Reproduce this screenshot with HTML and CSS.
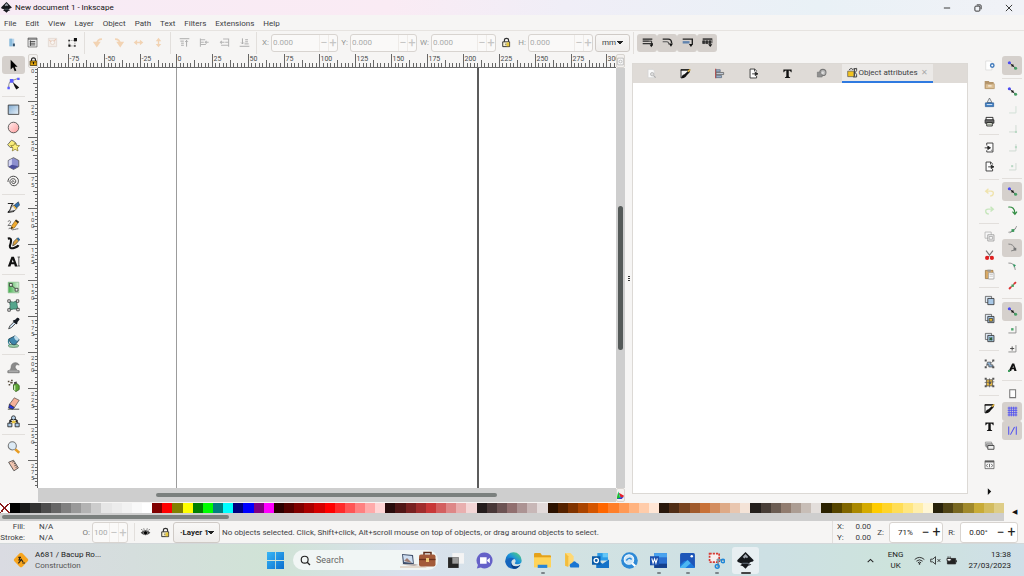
FILE: index.html
```html
<!DOCTYPE html>
<html lang="en">
<head>
<meta charset="utf-8">
<meta name="viewport" content="width=device-width, initial-scale=1">
<title>New document 1 - Inkscape</title>
<link rel="stylesheet" href="styles.css">
</head>
<body>
<svg class="sprite" aria-hidden="true">
  <defs>
    <linearGradient id="g-blue" x1="0" y1="0" x2="1" y2="1"><stop offset="0" stop-color="#7fa9cf"/><stop offset="1" stop-color="#eaf3fb"/></linearGradient>
    <linearGradient id="g-pink" x1="0" y1="0" x2="1" y2="1"><stop offset="0" stop-color="#fff0f0"/><stop offset="1" stop-color="#ff9c9c"/></linearGradient>
    <linearGradient id="g-green" x1="0" y1="0" x2="1" y2="0"><stop offset="0" stop-color="#3fae49"/><stop offset="1" stop-color="#d9f2da"/></linearGradient>
    <linearGradient id="g-win" x1="0" y1="0" x2="1" y2="1"><stop offset="0" stop-color="#38b6f5"/><stop offset="1" stop-color="#0a6fd0"/></linearGradient>
    <linearGradient id="g-edge" x1="0" y1="1" x2="1" y2="0"><stop offset="0" stop-color="#0b4fa8"/><stop offset=".5" stop-color="#1b93dc"/><stop offset="1" stop-color="#5fdc6c"/></linearGradient>
  </defs>
  <symbol id="inkscape" viewBox="0 0 16 16"><path d="M8 0 15.500 7.500Q16.300 9 13 9.500L11 10.500 13.500 12 10.500 13 8 15.800 5.500 13.500 3 12.500 5 11 .8 9.300Q-.3 8.500.7 7.300z" fill="#15181c"/><path d="M8 1.800 10.500 4.600 9.300 5.800 8.300 5 7 6.200 5.400 4.700z" fill="#a4abb4"/><path d="M5 10.500h5l2 1.500" stroke="#66717d" fill="none"/></symbol>
  <symbol id="doc-props" viewBox="0 0 16 16"><path d="M3.500 2.500h7v11h-7z" fill="#b7d4ea"/><path d="M3.500 2.500h4v11h-4z" fill="#8bbbdc"/><path d="M8.500 9.500h3v4h-3z" fill="#35526d"/></symbol>
  <symbol id="xml" viewBox="0 0 16 16"><path d="M1.500 1.500h13v13h-13z" fill="#eee" stroke="#555"/><path d="M1.500 3h13M4 6.500h8M4 9h8M4 11.500h8M5 5v8" stroke="#444" stroke-width="1.300"/></symbol>
  <symbol id="fill-off" viewBox="0 0 16 16"><path d="M2 2h12v12H2z" fill="#f3ece7" stroke="#ddd3cc"/><circle cx="8" cy="8" r="3" fill="#f8f4f1" stroke="#dfcdc0"/><path d="m3 4 3 3M13 3l-3 3" stroke="#eac7b4" stroke-width="1.500"/></symbol>
  <symbol id="bbox" viewBox="0 0 16 16"><path d="M3 5h8.500v8H3z" fill="none" stroke="#777" stroke-dasharray="2 1"/><path d="M10 1.500h4.500V6H10zM2 11h3v3H2zM2 4h2v2H2zM10.500 12h2v2h-2z" fill="#111"/></symbol>
  <symbol id="rot-l" viewBox="0 0 16 16"><path d="M13 3Q6 3 5.500 10M2 8l3.500 5L9 8z" fill="none" stroke="#f2d3b3" stroke-width="2.400"/></symbol>
  <symbol id="rot-r" viewBox="0 0 16 16"><path d="M3 3q7 0 7.500 7M7 8l3.500 5L14 8z" fill="none" stroke="#f2d3b3" stroke-width="2.400"/></symbol>
  <symbol id="flip-h" viewBox="0 0 16 16"><path d="M1 8l5-4v3h4V4l5 4-5 4V9H6v3z" fill="#f2d3b3"/></symbol>
  <symbol id="flip-v" viewBox="0 0 16 16"><path d="M8 1l4 5H9v4h3l-4 5-4-5h3V6H4z" fill="#f2d3b3"/></symbol>
  <symbol id="raise-top" viewBox="0 0 16 16"><path d="M1 2.500h14M2 6h5M3 9h4M3 12h4M11 14V5m-2 2 2-2 2 2" stroke="#a9a9a9" stroke-width="1.400" fill="none"/></symbol>
  <symbol id="raise" viewBox="0 0 16 16"><path d="M2 2v12M2 4h7M2 7.500h5M2 11h8M14 7.500H9m2-2-2 2 2 2" stroke="#b5b5b5" stroke-width="1.500" fill="none"/></symbol>
  <symbol id="lower" viewBox="0 0 16 16"><path d="M14 2v12M6 3h8M9 7.500h5M3 12h11M2 7.500h6m-4-2-2 2 2 2" stroke="#b5b5b5" stroke-width="1.500" fill="none"/></symbol>
  <symbol id="lower-bot" viewBox="0 0 16 16"><path d="M1 13.500h14M8 10h6M9 7h4M9 4h4M5 2v8M3 8l2 2 2-2" stroke="#a9a9a9" stroke-width="1.400" fill="none"/></symbol>
  <symbol id="lock-open" viewBox="0 0 16 16"><path d="M5 7V4.500Q5 2 8 2t3 2.500V7" fill="none" stroke="#333" stroke-width="1.700"/><path d="M2.500 7h10v7h-10z" fill="#f7f2d4" stroke="#222" stroke-width="1.300"/><path d="M8 8h4v5.500H8z" fill="#e8c93e"/><path d="M7 9.500v2.500" stroke="#333"/></symbol>
  <symbol id="lock" viewBox="0 0 16 16"><path d="M4.500 8V5Q4.500 1.500 8 1.500T11.500 5v3" fill="none" stroke="#222" stroke-width="2"/><path d="M2 7h12v8H2z" fill="#e8a90c" stroke="#3a2a04" stroke-width="1.400"/><path d="M2 10h12" stroke="#7a5402"/><path d="M8 9v4" stroke="#111" stroke-width="2"/></symbol>
  <symbol id="tr-stroke" viewBox="0 0 16 16"><path d="M1 3h14M1 6h9" stroke="#222" stroke-width="1.800"/><path d="M1 9.500h14v3" fill="none" stroke="#333" stroke-width="1.800"/><path d="M10 6h4v6" fill="none" stroke="#222" stroke-width="1.400"/><path d="M11 11h5l-2.500 4z" fill="#111"/></symbol>
  <symbol id="tr-corner" viewBox="0 0 16 16"><path d="M1 3h8q5 0 5 6" fill="none" stroke="#222" stroke-width="2"/><path d="M1 7h6q3 0 3 4" fill="none" stroke="#555" stroke-width="1.500"/><path d="M10 9.500h6l-3 4.500z" fill="#111"/></symbol>
  <symbol id="tr-grad" viewBox="0 0 16 16"><path d="M1 3h14v8" fill="none" stroke="#222" stroke-width="2"/><path d="M1 6h10v3.500H1z" fill="#6284ae"/><path d="M10 10h6l-3 4.500z" fill="#111"/></symbol>
  <symbol id="tr-pat" viewBox="0 0 16 16"><path d="M1 3h14" fill="none" stroke="#222" stroke-width="2"/><path d="M1 5.500h3v4H1zM5.500 5.500h3v4h-3zM10 5.500h3v4h-3zM14.500 4v5" fill="#333" stroke="#222"/><path d="M9 10.500h6l-3 4z" fill="#111"/></symbol>
  <symbol id="t-select" viewBox="0 0 16 16"><path d="M4.500 1v12l3-2.800 2 4.800 2-1-2-4.500h3.500z" fill="#000"/></symbol>
  <symbol id="t-node" viewBox="0 0 16 16"><path d="M2 13Q2 5 6 4.500L13 2" fill="none" stroke="#777"/><path d="M.5 12h3v3h-3zM3.500 2.500h4.500v4.500H3.500zM12.500.8h3v3h-3z" fill="#5a5aff"/><path d="M7 6l8 7-3.500 2.500L9.500 12z" fill="#111"/></symbol>
  <symbol id="t-rect" viewBox="0 0 16 16"><path d="M1.500 2.500h13v11.500h-13z" fill="url(#g-blue)" stroke="#333"/></symbol>
  <symbol id="t-circle" viewBox="0 0 16 16"><circle cx="8" cy="8" r="6.500" fill="url(#g-pink)" stroke="#444"/></symbol>
  <symbol id="t-star" viewBox="0 0 16 16"><path d="M5.500 1.500 9 3l2.500 3-2.500 4-5 .5L.8 7z" fill="#f8ec7a" stroke="#555"/><path d="m10 4.500 1.500 3.200 4 .5-2.800 2.500.8 4-3.500-2-3.500 2 .8-4L4.500 8.200l4-.5z" fill="#fdf07e" stroke="#77691a" stroke-width=".8"/></symbol>
  <symbol id="t-box" viewBox="0 0 16 16"><path d="m8 .8 6.500 3.500v7.500L8 15.300 1.500 11.800V4.300z" fill="#8d90cf" stroke="#555"/><path d="M6 2v8l-4 2V4.500z" fill="#d3d5f2"/><path d="M6 9.500 14 11.500 8 15 2 12z" fill="#4c4f9c"/></symbol>
  <symbol id="t-spiral" viewBox="0 0 16 16"><path d="M8 8.500C9 7.500 7.500 6.500 6.500 7.300 5 8.500 6.300 10.700 8.300 10.500 11 10.200 11.500 7 9.800 5.400 7.500 3.400 4 5 3.600 8 3.200 11 6 13.500 9 13.200 12.800 12.800 14.800 9 13.800 5.700 12.800 2.300 9 .8 5.800 1.800 2.800 2.800 1 5.500 1.200 8.500" fill="none" stroke="#444" stroke-width="1.200"/></symbol>
  <symbol id="t-pen" viewBox="0 0 16 16"><path d="M1 3h7M7 3Q5 6 4.500 9T1 14l7-1 2-3" fill="none" stroke="#222" stroke-width="1.300"/><path d="m3 13 2.500-6 3-2 3.500 4-2 2.500z" fill="#eee" stroke="#444"/><path d="M9 5l5-4 1.500 4-4 4z" fill="#2f6fae" stroke="#222" stroke-width=".6"/><path d="M8.500 5.500 12 9l-1.500 1.500-3.300-3.700z" fill="#e9b94d"/></symbol>
  <symbol id="t-pencil" viewBox="0 0 16 16"><path d="M1 3q3-2 3.500 0T1 8h4M2 12q2-2 3 0t4 1 5-1" fill="none" stroke="#666" stroke-width="1.100"/><path d="M5 12 6 8l5-7 3.500 2.500-5.500 7.500z" fill="#f2ac2e" stroke="#6a4a14" stroke-width=".7"/><path d="m5 12 .7-2.500 1.800 1.300z" fill="#111"/><path d="m11 1 3.500 2.500-1 1.600L10 2.500z" fill="#2b2b2b"/></symbol>
  <symbol id="t-callig" viewBox="0 0 16 16"><path d="M1 2q4-1 4 2T3.500 11q0 4 5 2.500T14 10" fill="none" stroke="#111" stroke-width="2.600"/><path d="m7 11 1-5 5-5 2.500 2.500L10.500 9z" fill="#dba23e" stroke="#333" stroke-width=".8"/><path d="m12 2 2-1.500 2 2.500-2 2z" fill="#2d6a9f"/></symbol>
  <symbol id="t-text" viewBox="0 0 16 16"><path d="M1 14 5.500 2h3L13 14h-3.300l-.8-2.500H5.100L4.300 14zm5-5h2.200L7 5.500z" fill="#111"/><path d="M13 2.500h3M14.500 2.500v11M13 13.500h3" stroke="#444" fill="none"/></symbol>
  <symbol id="t-grad" viewBox="0 0 16 16"><path d="M1.500 1.500h13v13h-13z" fill="url(#g-green)" stroke="#8fbf92"/><path d="m5 5 6 5" stroke="#333"/><path d="M3 3h3.500v3.500H3zM10 9h3.500v3.500H10z" fill="#e9f5e9" stroke="#333"/></symbol>
  <symbol id="t-mesh" viewBox="0 0 16 16"><path d="M3 3q5 2 9-.5 0 5 1.500 10Q8 11.500 3 13.500 5 8 3 3z" fill="#55a68d" stroke="#2f6b59"/><path d="M1 1h3v3H1zM11.500 1h3v3h-3zM1 12h3v3H1zM12 11.500h3v3h-3z" fill="#fff" stroke="#333"/></symbol>
  <symbol id="t-drop" viewBox="0 0 16 16"><path d="M2 14.500 3.500 11l5-5L10.500 8l-5 5z" fill="#cfe3f5" stroke="#333"/><path d="m8 4 2-.5L12.500 1Q15 .5 15.500 3L13 6l-.5 2.500L11.500 9 7 5z" fill="#151a22"/></symbol>
  <symbol id="t-bucket" viewBox="0 0 16 16"><ellipse cx="8" cy="13.300" rx="6.500" ry="2" fill="#9cd0ab" stroke="#3c6d4b" stroke-width=".8"/><path d="m2 5 8-4 5 5-5 6q-5 1-8-7z" fill="#3f86ac" stroke="#24404f"/><ellipse cx="11.500" cy="4" rx="2" ry="3.500" transform="rotate(-45 11.500 4)" fill="#bcdcec"/><path d="M2 5Q1 9 3 12" fill="none" stroke="#2d7a8c" stroke-width="1.500"/></symbol>
  <symbol id="t-tweak" viewBox="0 0 16 16"><path d="M1 14.500V12q4 0 4-4 0-6 6-6 3 .5 4 3-3-1.500-4.500.5T11 9.500q.5 2.500 4 2.500v2.500z" fill="#8a8a8a" stroke="#666" stroke-width=".7"/><path d="M2 12.500h12" stroke="#c8c8c8"/></symbol>
  <symbol id="t-spray" viewBox="0 0 16 16"><path d="m8 7 4-1.500 3 2.500v5l-4 2.500L8 13z" fill="#5ca534" stroke="#2f5c18"/><path d="M8.500 4 12 3v2.500L9 6.500z" fill="#444"/><path d="M1 2h2v2H1zM4 3.500h3v2H4zM2 6h2v2H2zM5 1h2v1.500H5z" fill="#554a3a"/><path d="M9.500 8v6" stroke="#d5efc4" stroke-width="1.500"/></symbol>
  <symbol id="t-eraser" viewBox="0 0 16 16"><path d="m3 9 6-8 6 3-6 9z" fill="#f5b199" stroke="#444" stroke-width=".8"/><path d="m3 9 6 4-2 2-5-1.500z" fill="#2937e0" stroke="#222" stroke-width=".8"/><path d="M1 15h14" stroke="#333"/></symbol>
  <symbol id="t-conn" viewBox="0 0 16 16"><path d="M3.500 11V7L8 4l4.500 3v4M3.500 8h9" fill="none" stroke="#222" stroke-width="1.500"/><path d="M1 10h5v4.500H1zM10 10h5v4.500h-5z" fill="#aac8e4" stroke="#222"/><circle cx="8" cy="3.500" r="2.500" fill="#b5d0e8" stroke="#222"/><path d="M6 7h5l-1 3H6z" fill="#e6c33f"/></symbol>
  <symbol id="t-zoom" viewBox="0 0 16 16"><path d="m10 10 5 4.500" stroke="#e79c22" stroke-width="3.200"/><circle cx="6.500" cy="6" r="5" fill="#dceaf5" stroke="#777" stroke-width="1.300"/></symbol>
  <symbol id="t-measure" viewBox="0 0 16 16"><path d="m2 4 6-2.500 6 9.500-5.500 3.500z" fill="#f0c4b0" stroke="#444"/><path d="M8.500 3 6.500 4M10 5.200 8.500 6M11.500 7.300 9 8.500M12.500 9.500l-2 1" stroke="#444"/></symbol>
  <symbol id="d-search" viewBox="0 0 16 16"><path d="M3 2h7l2 2v10H3z" fill="#fafafa" stroke="#d5d5d5"/><circle cx="9" cy="9" r="2.500" fill="#ddd" stroke="#aaa"/><path d="m11 11 3 3" stroke="#aaa" stroke-width="1.500"/></symbol>
  <symbol id="d-fill" viewBox="0 0 16 16"><path d="M1.500 2.500h13q-1.500 5-5 7.500t-4.500 4l-3.500.5z" fill="#f4f4f4" stroke="#111" stroke-width="1.200"/><path d="M1 2h13v1.800H1z" fill="#111"/><path d="M2 14.500q0-4 4.500-5.500L12 4l2.500 1.500L10 10q-2 5-8 4.500z" fill="#111"/><path d="m11 4.500 3-3 1.500 1.500-3 3z" fill="#e5b63b"/></symbol>
  <symbol id="d-align" viewBox="0 0 16 16"><path d="M2.500 1v14" stroke="#b33" stroke-width="1.500"/><path d="M3 2.500h6v3H3zM3 11h8v3H3z" fill="#9db3cc" stroke="#56657a"/><path d="M3 6.500h11v3H3z" fill="#c0c9d6" stroke="#555"/></symbol>
  <symbol id="d-export" viewBox="0 0 16 16"><path d="M9.500 1.500H3v13h9.500v-3M12.500 5V4l-3-2.500V5" fill="#fdfdfd" stroke="#333" stroke-width="1.300"/><path d="M6 8.500h5M10.500 6l4 2.500-4 2.500z" fill="#222" stroke="#222" stroke-width="1.200"/></symbol>
  <symbol id="d-import" viewBox="0 0 16 16"><path d="M4 5V1.500h9v13H4V12" fill="#fdfdfd" stroke="#333" stroke-width="1.300"/><path d="M1 8.500h5M5.500 6l4 2.500-4 2.500z" fill="#222" stroke="#222" stroke-width="1.200"/><path d="M10 12h2" stroke="#444"/></symbol>
  <symbol id="d-text" viewBox="0 0 16 16"><path d="M2 2h12v4h-1Q12.500 3.500 9.800 3.500V12q0 1.300 2 1.500V14.500H4.300v-1q2 0 2-1.500V3.500Q3.500 3.500 3 6H2z" fill="#111"/></symbol>
  <symbol id="d-shapes" viewBox="0 0 16 16"><circle cx="10" cy="6.500" r="4.500" fill="#b9b9b9" stroke="#777" stroke-width="1.500"/><path d="M2 6h7v7H2z" fill="#909090" stroke="#777"/><circle cx="9.500" cy="7" r="2" fill="#ddd"/></symbol>
  <symbol id="d-attr" viewBox="0 0 16 16"><path d="M1 6h9v8H1z" fill="#f3c31e" stroke="#555"/><path d="m3 4 3-2 3 2M9 3l5-1v3l-2 3 2 3v3.500H9M11 2v12" fill="none" stroke="#333" stroke-width="1.300"/></symbol>
  <symbol id="c-new" viewBox="0 0 16 16"><path d="M2.500 1.500h7l2 2v11h-9z" fill="#fff" stroke="#d5d5d5"/><circle cx="12" cy="8" r="2.500" fill="#fff" stroke="#3f79bb" stroke-width="2"/></symbol>
  <symbol id="c-open" viewBox="0 0 16 16"><path d="M1 3h6l1 1.500h6V14H1z" fill="#b3946a"/><path d="M2 7h13v7H2z" fill="#dcbf94" stroke="#b3946a"/><path d="M6 9h5v2H6z" fill="#f6ecdb"/></symbol>
  <symbol id="c-save" viewBox="0 0 16 16"><path d="M8 1.500 11.500 8h-7z" fill="#e4ecf4" stroke="#555"/><path d="M2 8.500h12V14H2z" fill="#3d7dc2" stroke="#2b5c94"/><path d="M4 11h8" stroke="#cfe0f2" stroke-width="1.500"/></symbol>
  <symbol id="c-print" viewBox="0 0 16 16"><path d="M3 2h10v4H3z" fill="#fff" stroke="#222" stroke-width="1.300"/><path d="M1.500 5.500h13v5h-13z" fill="#666" stroke="#222"/><path d="M4 9.500h8v5H4z" fill="#f3fbe9" stroke="#222" stroke-width="1.300"/><path d="M5 12h6" stroke="#555"/></symbol>
  <symbol id="c-undo" viewBox="0 0 16 16"><path d="M3 6h7q4 0 3.500 3.500T9 13M6.500 2.500 2.500 6l4 3.500" fill="none" stroke="#efe3ad" stroke-width="2"/></symbol>
  <symbol id="c-redo" viewBox="0 0 16 16"><path d="M13 6H6q-4 0-3.500 3.500T7 13M9.500 2.500l4 3.500-4 3.500" fill="none" stroke="#c7e6bd" stroke-width="2"/></symbol>
  <symbol id="c-copy" viewBox="0 0 16 16"><path d="M1.500 1.500h9v9h-9z" fill="#f6f6f6" stroke="#aaa"/><path d="M5.500 5.500h9v9h-9z" fill="#f6f6f6" stroke="#888"/><path d="M7.500 8h5v4h-5z" fill="none" stroke="#999"/></symbol>
  <symbol id="c-cut" viewBox="0 0 16 16"><path d="m3 1 7 9M13 1l-7 9" stroke="#777" stroke-width="1.700"/><circle cx="4.500" cy="11.500" r="3" fill="#e02020"/><circle cx="11.500" cy="11.500" r="3" fill="#e02020"/></symbol>
  <symbol id="c-paste" viewBox="0 0 16 16"><path d="M2 2h11v12H2z" fill="#d9a964" stroke="#8f6c39"/><path d="M5 1h5v3H5z" fill="#999"/><path d="M6.500 5.500h8v9h-8z" fill="#fbfbfb" stroke="#999"/><path d="M8 8h5M8 10.500h5" stroke="#bbb"/></symbol>
  <symbol id="c-dup" viewBox="0 0 16 16"><path d="M2 2h9v9H2z" fill="#dfe9f3" stroke="#444"/><path d="M5.500 5h9v9h-9z" fill="#a9c8e6" stroke="#333" stroke-width="1.200"/></symbol>
  <symbol id="c-clone" viewBox="0 0 16 16"><path d="M2 2h9v9H2z" fill="#dfe9f3" stroke="#444"/><path d="M5.500 5h9v9h-9z" fill="#a9c8e6" stroke="#333" stroke-width="1.200"/><path d="M7.500 8h5v4h-5z" fill="#e4b32e" stroke="#333"/></symbol>
  <symbol id="c-unlink" viewBox="0 0 16 16"><path d="M2 2h9v9H2z" fill="#dfe9f3" stroke="#444"/><path d="M5.500 5h9v9h-9z" fill="#a9c8e6" stroke="#333" stroke-width="1.200"/><path d="m8 8 4 4m0-4-4 4" stroke="#2e5a3a" stroke-width="2"/></symbol>
  <symbol id="c-group" viewBox="0 0 16 16"><path d="M5 6h5v4h3v3H7v-3H4z" fill="#8eb0d2" stroke="#444"/><path d="M1 2h3v3H1zM12 2h3v3h-3zM1 12h3v3H1zM12 12h3v3h-3z" fill="#555"/><path d="m11 7 3-4M3 12l3-3" stroke="#555"/></symbol>
  <symbol id="c-ungroup" viewBox="0 0 16 16"><path d="M3.500 4h9v9h-9z" fill="#e3b643" stroke="#444"/><path d="M1 1h3v3H1zM12 1h3v3h-3zM1 12h3v3H1zM12 12h3v3h-3zM7 7h3v3H7z" fill="#555"/><path d="m1 8 14-1M8 2v13" stroke="#555"/></symbol>
  <symbol id="c-layers" viewBox="0 0 16 16"><path d="M2 3h9v6H2z" fill="#ddd" stroke="#888"/><path d="M3.500 5.500h9v5h-9z" fill="#bbb" stroke="#777"/><path d="M5.500 8h9v5.500h-9z" fill="#eee" stroke="#333" stroke-width="1.200"/></symbol>
  <symbol id="c-xml" viewBox="0 0 16 16"><path d="M1.500 2.500h13v11.500h-13z" fill="#f8f8f8" stroke="#444"/><path d="M1.500 4h13" stroke="#555" stroke-width="2"/><path d="M5.500 7 3.500 9.500l2 2.500M10.500 7l2 2.500-2 2.500M8 7v5" fill="none" stroke="#555" stroke-width="1.200"/></symbol>
  <symbol id="play" viewBox="0 0 16 16"><path d="M5 2v12l6-6z" fill="#111"/></symbol>
  <symbol id="s-nodes" viewBox="0 0 16 16"><path d="m3.500 4 9 8" stroke="#222" stroke-width="1.300"/><circle cx="3.500" cy="4" r="2.300" fill="#4c4cf2"/><circle cx="12.500" cy="12" r="2.300" fill="#46a066"/><path d="M6.500 6.500h3v3h-3z" fill="#111"/></symbol>
  <symbol id="s-edge" viewBox="0 0 16 16"><path d="M13 3v10H3" fill="none" stroke="#cfe0d5" stroke-width="1.300"/></symbol>
  <symbol id="s-corner" viewBox="0 0 16 16"><path d="M13 3v10H3" fill="none" stroke="#cdd8d0" stroke-width="1.300"/><path d="M11.500 11.500h3v3h-3z" fill="#b9d8c4"/></symbol>
  <symbol id="s-mid" viewBox="0 0 16 16"><path d="M13 3v10H3" fill="none" stroke="#cdd8d0" stroke-width="1.300"/><path d="M11.500 6h3v3h-3z" fill="#b9d8c4"/></symbol>
  <symbol id="s-cent" viewBox="0 0 16 16"><path d="M13 3v10H3" fill="none" stroke="#cdd8d0" stroke-width="1.300"/><path d="M6 6h3v3H6z" fill="#b9d8c4"/></symbol>
  <symbol id="s-path" viewBox="0 0 16 16"><path d="M2 3q9-1 9.500 9M8 9.500l3.500 4 3-4" fill="none" stroke="#2e8b3f" stroke-width="1.700"/></symbol>
  <symbol id="s-inter" viewBox="0 0 16 16"><path d="M2 12q9 0 12-9M4 13 13 6" fill="none" stroke="#888" stroke-width="1.200"/><path d="M6.500 7.500h4v4h-4z" fill="#3b9a5b"/></symbol>
  <symbol id="s-cusp" viewBox="0 0 16 16"><path d="M2 3q7 0 9 6M13 9q-3 4-7 4" fill="none" stroke="#777" stroke-width="1.300"/><path d="M9.500 8.500h4v4h-4z" fill="#777"/></symbol>
  <symbol id="s-smooth" viewBox="0 0 16 16"><path d="M2 3q9-1 10 10" fill="none" stroke="#888" stroke-width="1.300"/><path d="m9 4 4 2-3 3.500z" fill="#2f9a63"/></symbol>
  <symbol id="s-line" viewBox="0 0 16 16"><path d="M3 13 13 3" stroke="#555"/><path d="m2 12 3-3 2 2-3 3zM9 5l3-3 2 2-3 3z" fill="#d33"/><path d="M6.500 6.500h3.500V10H6.500z" fill="#4a9a55"/></symbol>
  <symbol id="s-obj" viewBox="0 0 16 16"><path d="M13 3v10H2" fill="none" stroke="#888" stroke-width="1.300"/><path d="M6 6h3.500v3.500H6z" fill="#4aa56a"/></symbol>
  <symbol id="s-rot" viewBox="0 0 16 16"><path d="M13 3v10H2" fill="none" stroke="#888" stroke-width="1.300"/><path d="M4.500 8h6M7.500 5v6" stroke="#444" stroke-width="1.300"/></symbol>
  <symbol id="s-text" viewBox="0 0 16 16"><path d="M2.500 13 7.500 2h3l3.500 11h-3.300l-.6-2.300H7L6 13zm5.500-4.500h1.700L9.200 5.500z" fill="#111"/><path d="M1.500 11.500h3v3h-3z" fill="#3b9a5b"/></symbol>
  <symbol id="s-page" viewBox="0 0 16 16"><path d="M4 2.500h8.500V14H4z" fill="#fdfdfd" stroke="#777" stroke-width="1.500"/></symbol>
  <symbol id="s-grid" viewBox="0 0 16 16"><path d="M1 3h14M1 6.300h14M1 9.700h14M1 13h14M3 1v14M6.300 1v14M9.700 1v14M13 1v14" stroke="#5050f0" stroke-width="1.300"/></symbol>
  <symbol id="s-guide" viewBox="0 0 16 16"><path d="M2.500 2v12M5 14 11 3M13.500 2v12" stroke="#5050f0" stroke-width="1.500"/></symbol>
  <symbol id="cms" viewBox="0 0 16 16"><path d="M4 1 1 14h7z" fill="#19c02c"/><path d="m4 1 4 13 2-3z" fill="#00bcd4"/><path d="m5 3 10 6-6 4z" fill="#e8202a"/><path d="M1 14h9l4-4z" fill="#2936d8"/></symbol>
  <symbol id="zoom-fit" viewBox="0 0 16 16"><path d="M3 2h10v12H3z" fill="#fafafa" stroke="#999"/><circle cx="8" cy="8" r="2.500" fill="none" stroke="#999"/></symbol>
  <symbol id="eye" viewBox="0 0 16 16"><path d="M1 8.500q7-8 14 0-7 7-14 0z" fill="#444"/><circle cx="8" cy="8.500" r="3" fill="#000" stroke="#ccc" stroke-width=".7"/><path d="M3.500 5 2 3M6 4l-.5-2M10 4l.5-2M12.500 5 14 3" stroke="#333"/></symbol>
  <symbol id="roadworks" viewBox="0 0 24 24"><path d="M12 1q1 0 2 1l8 8q2 2 0 4l-8 8q-2 2-4 0l-8-8q-2-2 0-4l8-8q1-1 2-1z" fill="#f7a41d"/><path d="m11 7-2 5h3l-4 5M12 10l3 5M14 16.500h4M8 8h4" stroke="#29231a" stroke-width="1.700" fill="none"/></symbol>
  <symbol id="windows" viewBox="0 0 16 16"><path d="M0 0h7.600v7.600H0zM8.400 0H16v7.600H8.400zM0 8.400h7.600V16H0zM8.400 8.400H16V16H8.400z" fill="url(#g-win)"/></symbol>
  <symbol id="search" viewBox="0 0 16 16"><circle cx="6.800" cy="6.800" r="5" fill="none" stroke="#222" stroke-width="1.700"/><path d="m10.500 10.500 4 4" stroke="#222" stroke-width="1.900"/></symbol>
  <symbol id="luggage" viewBox="0 0 36 18"><path d="M0 15h24l3 2H0z" fill="#e4d9cd"/><path d="m2 3 11 1 1 10-11-1z" fill="#40506b"/><path d="m3 4 9 1 1 7-9-1z" fill="#cfdff1"/><path d="m4 10 3-3 5 5z" fill="#9e7c72"/><path d="M1 13.500 14 15l5-1-4-1z" fill="#b9b0ac"/><path d="M24 4V1.500h7V4" fill="none" stroke="#5d2c1a" stroke-width="1.500"/><rect x="19" y="3.500" width="16.500" height="12" rx="2" fill="#a35a3a"/><path d="M19 8.500h16.500" stroke="#6b321e" stroke-width="1.300"/><path d="M26 7h3v4h-3z" fill="#f0c878"/></symbol>
  <symbol id="taskview" viewBox="0 0 16 16"><path d="M5 1h11v10H5z" fill="#f4f4f4"/><path d="M1 5h10v10H1z" fill="#262626"/><path d="M5 5h6v6H5z" fill="#9b9b9b"/></symbol>
  <symbol id="chat" viewBox="0 0 16 16"><path d="M8 .5a7.500 7.500 0 1 1-3.500 14.100L.8 15.500l1-3.300A7.500 7.500 0 0 1 8 .5z" fill="#6561c8"/><path d="M3.800 5h6.200v6H3.800zM10.500 7.500 13 5.500v5l-2.500-2z" fill="#fff"/></symbol>
  <symbol id="edge" viewBox="0 0 16 16"><path d="M.3 8A7.700 7.700 0 0 1 15.700 8q0 3.500-4 3.500-2.500 0-2.500-1.200 1-.8.8-2Q9.500 6 6.500 6 2 6 .3 10z" fill="url(#g-edge)"/><path d="M.3 9.500Q1.500 5.500 6 5.500q2 0 3 1-3 .5-3 3.300Q6.300 13 9.500 13.500q3 .3 5-1.500-2 4-6.500 4Q1.500 15.500.3 9.500z" fill="#1565bd"/><path d="M6 9.800q.3 3.200 3.500 3.700 3 .3 5-1.500-2 3.500-5.500 3.800Q5 14.500 6 9.800z" fill="#0c3f86"/></symbol>
  <symbol id="folder" viewBox="0 0 16 16"><path d="M0 2q0-1 1-1h5l1.500 2H15q1 0 1 1v10H0z" fill="#e5a21a"/><path d="M0 5h16v9.500H0z" fill="#ffd459"/><path d="M3.500 12h9v3h-9z" fill="#2a86d8"/></symbol>
  <symbol id="onedrive" viewBox="0 0 16 16"><path d="M2 1h5l3 3v9H2z" fill="#ffd975"/><path d="M2 1l3 3v10l-3-1z" fill="#f3bd3d"/><path d="M7 14.500q-2-3 1.500-4.200 2-3 4.500 0 3 .7 2 4.200z" fill="#1a76d2"/></symbol>
  <symbol id="outlook" viewBox="0 0 16 16"><path d="M5 1h10v7H5z" fill="#2a9be8"/><path d="M10 1h5v4h-5z" fill="#64c6f6"/><path d="m4 7 6 4 6-4v8H4z" fill="#1673c8"/><path d="M0 4h8v8H0z" fill="#0a5ba8"/><circle cx="4" cy="8" r="2" fill="none" stroke="#fff" stroke-width="1.300"/></symbol>
  <symbol id="finder" viewBox="0 0 16 16"><circle cx="8" cy="8" r="7.800" fill="#2d89d6"/><circle cx="7.500" cy="7" r="4.500" fill="#cfe6f7" stroke="#f0f8fd"/><path d="m10.500 10.500 3 3" stroke="#fff" stroke-width="2"/><path d="M5 8q2.500-3.500 5-1" fill="none" stroke="#2d89d6" stroke-width="1.400"/></symbol>
  <symbol id="word" viewBox="0 0 16 16"><path d="M4 1h12v14H4z" fill="#2b6fd0"/><path d="M4 1h12v4H4z" fill="#4aa3ee"/><path d="M4 11h12v4H4z" fill="#143f8c"/><path d="M0 4h8.500v8.500H0z" fill="#1a4fae"/><path d="m1.700 6 1.200 4.500L4.300 6.500l1.300 4L6.900 6" fill="none" stroke="#fff"/></symbol>
  <symbol id="photos" viewBox="0 0 16 16"><rect x="1" y="1" width="14" height="14" rx="1.500" fill="#1d56b8"/><path d="m1 12 4-3.500L9 8l6 6.500V15H1z" fill="#1b78dc"/><path d="m1 14 7-6.500 3 3L6 15H1z" fill="#4cb7f2"/><circle cx="12" cy="4" r="1.200" fill="#fff"/></symbol>
  <symbol id="snip" viewBox="0 0 16 16"><path d="M1.500 1.500h9v8h-9z" fill="#f7efef" stroke="#d63a33" stroke-width="1.600" stroke-dasharray="2 1"/><path d="M8 7.500h7M9.500 6v8" stroke="#8496a5" stroke-width="1.600"/><circle cx="8.700" cy="13.500" r="1.800" fill="none" stroke="#1f87d8" stroke-width="1.400"/><circle cx="14" cy="8.500" r="1.600" fill="none" stroke="#1f87d8" stroke-width="1.400"/></symbol>
  <symbol id="chevron" viewBox="0 0 16 16"><path d="m3 11 5-5 5 5" fill="none" stroke="#222" stroke-width="1.800"/></symbol>
  <symbol id="wifi" viewBox="0 0 16 16"><path d="M1 6.500q7-6 14 0M3.500 9q4.500-4 9 0M5.700 11.300q2.300-2 4.600 0" fill="none" stroke="#222" stroke-width="1.300"/><circle cx="8" cy="13" r="1.200" fill="#222"/></symbol>
  <symbol id="mute" viewBox="0 0 16 16"><path d="M1 6h3l4-3.500v11L4 10H1z" fill="none" stroke="#222" stroke-width="1.200"/><path d="m11 6 4 4m0-4-4 4" stroke="#222" stroke-width="1.200"/></symbol>
  <symbol id="battery" viewBox="0 0 16 16"><path d="M2 5h12v8H2z" fill="#222" stroke="#222"/><path d="M15 7.500v3" stroke="#222" stroke-width="1.500"/><path d="M3 2v3M6 2v3M1.500 5h6v3q-3 2-6 0z" fill="#fff" stroke="#222" stroke-width="1.200"/></symbol>
  <symbol id="w-min" viewBox="0 0 16 16"><path d="M3 8h10" stroke="#222" stroke-width="1.400"/></symbol>
  <symbol id="w-restore" viewBox="0 0 16 16"><rect x="3" y="5" width="8" height="8" rx="1.500" fill="none" stroke="#222" stroke-width="1.400"/><path d="M6 3h5.500Q13 3 13 4.500V10" fill="none" stroke="#222" stroke-width="1.400"/></symbol>
  <symbol id="w-close" viewBox="0 0 16 16"><path d="m3 3 10 10M13 3 3 13" stroke="#222" stroke-width="1.400"/></symbol>
</svg>

<header class="titlebar">
  <svg class="app-icon"><use href="#inkscape"/></svg>
  <h1 class="title">New document 1 - Inkscape</h1>
  <div class="window-controls">
    <button aria-label="Minimise"><svg><use href="#w-min"/></svg></button>
    <button aria-label="Restore"><svg><use href="#w-restore"/></svg></button>
    <button aria-label="Close"><svg><use href="#w-close"/></svg></button>
  </div>
</header>

<nav class="menubar" aria-label="Menu">
  <button>File</button><button>Edit</button><button>View</button><button>Layer</button><button>Object</button><button>Path</button><button>Text</button><button>Filters</button><button>Extensions</button><button>Help</button>
</nav>

<div class="toolbar" role="toolbar" aria-label="Tool controls">
  <div class="tool-icons" data-icons="doc-props xml fill-off bbox | rot-l rot-r flip-h flip-v | raise-top raise lower lower-bot |"></div>
  <div class="field"><label for="pos-x">X:</label><div class="spin"><input id="pos-x" value="0.000" disabled><button disabled aria-label="Decrease X">−</button><button disabled aria-label="Increase X">+</button></div></div>
  <div class="field"><label for="pos-y">Y:</label><div class="spin"><input id="pos-y" value="0.000" disabled><button disabled aria-label="Decrease Y">−</button><button disabled aria-label="Increase Y">+</button></div></div>
  <div class="field field-size"><label for="size-w">W:</label><div class="spin"><input id="size-w" value="0.000" disabled><button disabled aria-label="Decrease width">−</button><button disabled aria-label="Increase width">+</button></div></div>
  <button class="icon-button" aria-label="Lock ratio"><svg><use href="#lock-open"/></svg></button>
  <div class="field field-size"><label for="size-h">H:</label><div class="spin"><input id="size-h" value="0.000" disabled><button disabled aria-label="Decrease height">−</button><button disabled aria-label="Increase height">+</button></div></div>
  <select class="unit" aria-label="Unit"><option>mm</option><option>px</option><option>in</option></select>
  <div class="tool-icons toggles" data-icons="| tr-stroke* tr-corner* tr-grad* tr-pat*"></div>
</div>

<main class="workspace">
  <div class="toolbox" role="toolbar" aria-label="Tools" data-icons="t-select* t-node | t-rect t-circle t-star t-box t-spiral | t-pen t-pencil t-callig t-text | t-grad t-mesh t-drop t-bucket | t-tweak t-spray t-eraser t-conn | t-zoom t-measure"></div>

  <section class="editor" aria-label="Canvas">
    <button class="corner" aria-label="Lock guides"><svg><use href="#lock"/></svg></button>
    <svg class="ruler ruler-h" id="ruler-h"></svg>
    <button class="corner" aria-label="Fit page"><svg><use href="#zoom-fit"/></svg></button>
    <svg class="ruler ruler-v" id="ruler-v"></svg>
    <div class="canvas"><div class="page"></div></div>
    <div class="scroll-v"><div class="thumb"></div></div>
    <div class="corner-gap"></div>
    <div class="scroll-h"><div class="thumb"></div></div>
    <button class="corner" aria-label="Colour management"><svg><use href="#cms"/></svg></button>
  </section>

  <div class="splitter" role="separator"><i></i><i></i><i></i></div>

  <aside class="dock">
    <div class="tabs" role="tablist">
      <button role="tab" aria-label="Find"><svg><use href="#d-search"/></svg></button>
      <button role="tab" aria-label="Fill and Stroke"><svg><use href="#d-fill"/></svg></button>
      <button role="tab" aria-label="Align"><svg><use href="#d-align"/></svg></button>
      <button role="tab" aria-label="Export"><svg><use href="#d-export"/></svg></button>
      <button role="tab" aria-label="Text"><svg><use href="#d-text"/></svg></button>
      <button role="tab" aria-label="Symbols"><svg><use href="#d-shapes"/></svg></button>
      <button role="tab" aria-selected="true" class="tab-active"><svg><use href="#d-attr"/></svg>Object attributes<span class="tab-close">✕</span></button>
    </div>
    <div class="dock-body"></div>
  </aside>

  <div class="commands">
    <div class="icon-column column-commands" data-icons="c-new c-open c-save c-print | d-import d-export | c-undo c-redo | c-copy c-cut c-paste | c-dup c-clone c-unlink | c-group c-ungroup | d-fill d-text c-layers c-xml"></div>
    <button class="icon-button more" aria-label="More commands"><svg><use href="#play"/></svg></button>
  </div>
  <div class="snapbar">
    <div class="icon-column" data-icons="s-nodes* | s-nodes s-edge s-corner s-mid s-cent | s-nodes* s-path s-inter s-cusp* s-smooth s-line | s-nodes* s-obj s-rot s-text | s-page s-grid* s-guide*"></div>
  </div>
</main>

<section class="palette" aria-label="Palette">
  <div class="palette-main">
    <div class="swatches" id="swatches"></div>
    <div class="palette-scroll"><div class="thumb"></div></div>
  </div>
  <button class="palette-menu" aria-label="Palette menu">◀</button>
</section>

<footer class="statusbar">
  <dl class="style-info"><dt>Fill:</dt><dd>N/A</dd><dt>Stroke:</dt><dd>N/A</dd></dl>
  <div class="field opacity"><label for="opacity">O:</label><div class="spin"><input id="opacity" value="100" disabled><button disabled aria-label="Decrease opacity">−</button><button disabled aria-label="Increase opacity">+</button></div></div>
  <div class="layer-tools">
    <button class="icon-button" aria-label="Layer visibility"><svg><use href="#eye"/></svg></button>
    <button class="icon-button" aria-label="Lock layer"><svg><use href="#lock-open"/></svg></button>
  </div>
  <select class="layer" aria-label="Layer"><option>·Layer 1</option></select>
  <p class="message">No objects selected. Click, Shift+click, Alt+scroll mouse on top of objects, or drag around objects to select.</p>
  <dl class="coords"><dt>X:</dt><dd>0.00</dd><dt>Y:</dt><dd>0.00</dd></dl>
  <div class="field zoom"><label for="zoom">Z:</label><div class="spin"><input id="zoom" value="71%"><button aria-label="Zoom out">−</button><button aria-label="Zoom in">+</button></div></div>
  <div class="field rotate"><label for="rotate">R:</label><div class="spin"><input id="rotate" value="0.00°"><button aria-label="Rotate left">−</button><button aria-label="Rotate right">+</button></div></div>
</footer>

<footer class="taskbar">
  <button class="widget"><svg><use href="#roadworks"/></svg><span><b>A681 / Bacup Ro...</b><small>Construction</small></span></button>
  <div class="apps">
    <button class="start" aria-label="Start"><svg><use href="#windows"/></svg></button>
    <label class="search"><svg class="search-icon"><use href="#search"/></svg><input type="search" placeholder="Search" aria-label="Search"><svg class="luggage"><use href="#luggage"/></svg></label>
    <button class="app" aria-label="Task view"><svg><use href="#taskview"/></svg></button>
    <button class="app" aria-label="Chat"><svg><use href="#chat"/></svg></button>
    <button class="app" aria-label="Edge"><svg><use href="#edge"/></svg></button>
    <button class="app running" aria-label="File Explorer"><svg><use href="#folder"/></svg></button>
    <button class="app" aria-label="OneDrive"><svg><use href="#onedrive"/></svg></button>
    <button class="app" aria-label="Outlook"><svg><use href="#outlook"/></svg></button>
    <button class="app" aria-label="Finder"><svg><use href="#finder"/></svg></button>
    <button class="app running" aria-label="Word"><svg><use href="#word"/></svg></button>
    <button class="app running" aria-label="Photos"><svg><use href="#photos"/></svg></button>
    <button class="app running" aria-label="Snipping Tool"><svg><use href="#snip"/></svg></button>
    <button class="app running focused" aria-label="Inkscape"><svg><use href="#inkscape"/></svg></button>
  </div>
  <div class="tray">
    <button aria-label="Hidden icons"><svg class="tray-chevron"><use href="#chevron"/></svg></button>
    <button class="lang">ENG<br>UK</button>
    <button class="status-icons" aria-label="Network, volume and battery"><svg><use href="#wifi"/></svg><svg><use href="#mute"/></svg><svg><use href="#battery"/></svg></button>
    <button class="clock">13:38<br>27/03/2023</button>
  </div>
</footer>
<script src="script.js"></script>
</body>
</html>
```

FILE: styles.css
```css
* { box-sizing: border-box; }
html, body { height: 100%; }
body {
  margin: 0;
  display: flex;
  flex-direction: column;
  overflow: hidden;
  background: #f6f5f4;
  color: #3c4043;
  font: 8px/11px Roboto, "Open Sans", sans-serif;
}
button, input, select { font: inherit; color: inherit; background: none; border: 0; padding: 0; margin: 0; }
button { display: flex; align-items: center; justify-content: center; }
svg { display: block; flex: none; }
.sprite { position: absolute; width: 0; height: 0; }
dl, dd, p, h1 { margin: 0; }

.titlebar {
  flex: 0 0 15px;
  display: flex;
  align-items: center;
  padding-left: 1px;
  background: linear-gradient(90deg, #f7ebf5 0%, #faebf4 38%, #f0eef7 55%, #e9f1f6 80%, #f1f2f7 100%);
  color: #111;
}
.app-icon { width: 11px; height: 11px; margin-right: 3px; }
.title { flex: 1; font-size: 8px; font-weight: 400; }
.window-controls { display: flex; }
.window-controls button { width: 31px; height: 15px; }
.window-controls svg { width: 10px; height: 10px; }

.menubar { flex: 0 0 16px; display: flex; gap: 9px; padding: 2px 4px 0; border-bottom: 1px solid #e6e3e0; }

.toolbar { flex: 0 0 23px; display: flex; align-items: center; padding: 0 2px; }
.tool-icons { display: flex; align-items: center; }
.icon-button { width: 20px; height: 18px; border-radius: 3px; flex: none; }
.icon-button svg { width: 11px; height: 11px; }
.icon-button.on { background: #d5d0cc; }
.sep { display: block; background: #e2dfdc; }
.toolbar .sep { width: 1px; height: 22px; margin: 0 3px 0 2px; }
.field { display: flex; align-items: center; justify-content: flex-end; flex: none; }
.toolbar .field { width: 79px; color: #929595; }
.toolbar .tool-icons + .field { width: 78px; }
.toolbar .icon-button + .field { width: 77px; }
.field label { margin-right: 2px; }
.spin { display: flex; align-items: stretch; border: 1px solid #d8d4d0; border-radius: 3px; background: #faf9f8; height: 18px; width: 67px; }
.field-size .spin { width: 65px; }
.spin input { flex: 1; min-width: 0; padding-left: 1px; }
.spin button { width: 9px; font-size: 13px; line-height: 13px; border-left: 1px solid #eeebe8; }
.spin input:disabled { color: #a9abab; }
.spin button:disabled { color: #c6c6c5; }
.unit, .layer {
  appearance: none;
  border: 1px solid #cfcac6;
  border-radius: 3px;
  background-image: linear-gradient(to bottom left, #222 50%, transparent 52%), linear-gradient(to bottom right, #222 50%, transparent 52%), linear-gradient(#f8f7f6, #efedeb);
  background-repeat: no-repeat;
  background-size: 3px 4px, 3px 4px, 100% 100%;
}
.unit { width: 35px; height: 18px; margin-left: 2px; padding-left: 6px; background-position: 21px 6px, 24px 6px, 0 0; }
.toggles .sep { margin-left: 3px; }

.workspace { flex: 1; min-height: 0; display: flex; }
.toolbox { flex: 0 0 28px; padding: 2px 3px 0 2px; }
.toolbox .icon-button { width: 23px; }
.toolbox .icon-button svg { width: 13px; height: 13px; }
.toolbox .sep { height: 1px; margin: 4px 0 3px; }

.editor { flex: 1; min-width: 0; display: grid; grid-template: 14px minmax(0, 1fr) 14px / 10px minmax(0, 1fr) 9px; }
.corner { overflow: hidden; background: #f3f1ef; border: 1px solid #d8d4d0; border-radius: 2px; }
.corner svg { width: 9px; height: 9px; }
.ruler { width: 100%; height: 100%; overflow: hidden; background: #f6f5f4; }
.ruler text { font-size: 7px; fill: #4a4d4f; }
.ruler-v text { font-size: 6px; }
.ruler line { stroke: #666; stroke-width: 1; shape-rendering: crispEdges; }
.canvas { position: relative; overflow: hidden; background: #fff; }
.page { position: absolute; left: 138px; top: -3px; bottom: -3px; width: 303px; border: solid #9c9c9c; border-width: 1px 2px 1px 1px; border-right-color: #5c5c5c; }
.thumb { border-radius: 3px; background: #7b807e; }
.scroll-v { background: #cecece; padding: 138px 2px 0; }
.scroll-v .thumb { height: 144px; background: #555a59; }
.corner-gap { background: #f6f5f4; }
.scroll-h { background: #cecece; padding: 5px 0 0 118px; }
.scroll-h .thumb { height: 4px; width: 341px; }

.splitter { flex: 0 0 7px; display: flex; flex-direction: column; align-items: center; justify-content: center; gap: 1px; }
.splitter i { width: 2px; height: 1px; background: #333; }

.dock { flex: 0 1 336px; margin: 9px 0 8px; display: flex; flex-direction: column; border: 1px solid #dcd9d5; }
.tabs { flex: 0 0 19px; display: flex; background: #dfdbd7; padding-left: 1px; }
.tabs button { flex: 0 0 34px; }
.tabs svg { width: 11px; height: 11px; }
.tabs .tab-active { flex: 0 0 91px; margin-left: 4px; background: #ebe9e7; border-bottom: 2px solid #2f7ae0; }
.tab-close { margin-left: 3px; color: #aaa; }
.dock-body { flex: 1; background: #fff; }

.commands { flex: 0 0 34px; padding: 2px 0 0 11px; display: flex; flex-direction: column; }
.snapbar { flex: 0 0 22px; padding: 2px 2px 0 0; }
.icon-column { display: flex; flex-direction: column; width: 20px; height: 384px; }
.column-commands { height: 418px; }
.icon-column .icon-button { flex: 1; }
.icon-column .sep { flex: 0 0 1px; margin: 3px 0; }
.more { margin-top: 8px; }
.more svg { width: 9px; height: 9px; }

.palette { flex: 0 0 18px; margin-top: 1px; display: flex; }
.palette-main { flex: 1; min-width: 0; }
.swatches { display: flex; height: 10px; }
.swatch { flex: 1; min-width: 0; }
.swatch-none { background: linear-gradient(45deg, transparent 45%, #8b1a1a 45% 55%, transparent 55%), linear-gradient(-45deg, transparent 45%, #8b1a1a 45% 55%, transparent 55%), #fff; }
.palette-scroll { height: 8px; padding: 2px; background: #cecece; }
.palette-scroll .thumb { height: 4px; width: 227px; }
.palette-menu { flex: 0 0 20px; font-size: 7px; color: #111; }

.statusbar { flex: 0 0 23px; display: flex; align-items: center; border-bottom: 1px solid #d3d8da; }
.style-info, .coords { display: grid; }
.style-info { flex: none; width: 78px; grid-template-columns: 25px 1fr; column-gap: 14px; }
.style-info dt { text-align: right; }
.opacity { width: 51px; padding-right: 1px; }
.statusbar .spin { height: 21px; }
.opacity label { color: #777; }
.opacity .spin { width: 36px; }
.layer-tools { display: flex; width: 39px; margin-left: 5px; border-left: 1px solid #e2dfdc; }
.layer { flex: none; width: 47px; height: 21px; padding-left: 6px; font-weight: 700; color: #222; background-position: 34px 8px, 37px 8px, 0 0; }
.message { flex: 1; min-width: 0; margin-left: 2px; white-space: nowrap; }
.coords { flex: none; width: 43px; grid-template-columns: 10px 1fr; padding: 0 4px; border-left: 1px solid #e2dfdc; }
.coords dd { text-align: right; }
.zoom .spin, .rotate .spin { background: #fff; color: #222; }
.zoom { width: 68px; }
.rotate { width: 75px; margin-right: 6px; }
.zoom .spin { width: 54px; }
.rotate .spin { width: 58px; }
.zoom label, .rotate label { margin-right: 5px; }
.zoom input, .rotate input { text-align: center; }
.zoom button, .rotate button { width: 11px; border: 0; font-size: 14px; }

.taskbar { flex: 0 0 32px; display: flex; align-items: center; justify-content: space-between; color: #222; background: linear-gradient(90deg, #dadbe2 0%, #d5dedd 13%, #d0e3d6 27%, #d9e1ee 40%, #d2e2e2 55%, #cde0e4 75%, #cde3dc 87%, #cfdfe8 100%); }
.widget { width: 267px; justify-content: flex-start; padding-left: 13px; gap: 6px; text-align: left; }
.widget svg { width: 16px; height: 16px; }
.widget b, .widget small { display: block; font: inherit; }
.widget small { color: #555; }
.apps { display: flex; align-items: center; flex: 1; }
.start svg { width: 17px; height: 17px; }
.search { display: flex; align-items: center; width: 145px; height: 20px; margin: 0 4px 0 9px; padding: 0 2px 0 7px; border-radius: 10px; background: #f1f6f5; }
.search-icon { width: 11px; height: 11px; margin-right: 5px; }
.search input { flex: 1; min-width: 0; appearance: none; font-size: 9px; outline: 0; }
.search input::placeholder { color: #666; opacity: 1; }
.luggage { width: 36px; height: 18px; }
.app { position: relative; width: 27px; height: 27px; margin-right: 2px; border-radius: 3px; }
.app svg { width: 17px; height: 17px; }
.app.running::after { content: ""; position: absolute; bottom: 0; left: 50%; width: 4px; height: 2px; margin-left: -2px; border-radius: 1px; background: #7c8489; }
.app.focused { background: #e8eff2; }
.app.focused::after { width: 10px; margin-left: -5px; background: #444; }
.tray { display: flex; align-items: center; padding-right: 13px; }
.tray-chevron { width: 9px; height: 9px; }
.lang { margin-left: 13px; }
.status-icons { gap: 5px; margin: 0 11px; }
.status-icons svg { width: 11px; height: 11px; }
.clock { text-align: right; }
```

FILE: script.js
```js
const SVG = "http://www.w3.org/2000/svg";

// Icon strips: names separated by spaces, "|" draws a separator, "*" marks an active button.
document.querySelectorAll("[data-icons]").forEach((strip) => {
  strip.dataset.icons.split(" ").forEach((token) => {
    if (token === "|") {
      const sep = document.createElement("span");
      sep.className = "sep";
      strip.append(sep);
      return;
    }
    const on = token.endsWith("*");
    const name = token.replace("*", "");
    const button = document.createElement("button");
    button.className = on ? "icon-button on" : "icon-button";
    button.setAttribute("aria-label", name);
    button.innerHTML = `<svg><use href="#${name}"/></svg>`;
    strip.append(button);
  });
});

// Rulers: one label every 25 mm, ten divisions between labels.
const STEP = 35.87;
function add(parent, tag, attrs, text) {
  const el = document.createElementNS(SVG, tag);
  Object.entries(attrs).forEach(([k, v]) => el.setAttribute(k, v));
  if (text) el.textContent = text;
  parent.append(el);
  return el;
}
const rulerH = document.getElementById("ruler-h");
const rulerV = document.getElementById("ruler-v");
for (let i = -38; i <= 133; i++) {
  const major = i % 10 === 0;
  const half = i % 5 === 0;
  const x = Math.round(138 + (i * STEP) / 10) + 0.5;
  add(rulerH, "line", { x1: x, x2: x, y1: major ? 0 : half ? 6 : 9, y2: 13 });
  if (major && i >= -30 && i <= 120) add(rulerH, "text", { x: x + 1, y: 7 }, String(i * 2.5));
}
for (let i = 0; i <= 118; i++) {
  const major = i % 10 === 0;
  const half = i % 5 === 0;
  const y = Math.round(-3 + (i * STEP) / 10) + 0.5;
  add(rulerV, "line", { y1: y, y2: y, x1: major ? 0 : half ? 5 : 7, x2: 10 });
  if (major) {
    const label = add(rulerV, "text", { y: y + 7 });
    [...String(i * 2.5)].forEach((digit, n) => add(label, "tspan", { x: 3, dy: n ? 6 : 0 }, digit));
  }
}
add(rulerH, "line", { x1: 0, x2: "100%", y1: 13.5, y2: 13.5 });
add(rulerV, "line", { x1: 9.5, x2: 9.5, y1: 0, y2: "100%" });

const COLORS = `000000 1a1a1a 333333 4d4d4d 666666 808080 999999 b3b3b3 cccccc e6e6e6 ececec f2f2f2 f9f9f9 ffffff
800000 ff0000 808000 ffff00 008000 00ff00 008080 00ffff 000080 0000ff 800080 ff00ff
2b0000 550000 800000 aa0000 d40000 ff0000 ff2a2a ff5555 ff8080 ffaaaa ffd5d5
280b0b 501616 782121 a02c2c c83737 d35f5f de8787 e9afaf f4d7d7
241c1c 483737 6c5353 916f6f ac9393 c8b7b7 e3dbdb
2b1100 552200 803300 aa4400 d45500 ff6600 ff7f2a ff9955 ffb380 ffccaa ffe6d5
28170b 502d16 784421 a05a2c c87137 d38d5f deaa87 e9c6af f4e3d7
241f1c 483e37 6c5d53 917c6f ac9d93 c8beb7 e3dedb
2b2200 554400 806600 aa8800 d4aa00 ffcc00 ffd42a ffdd55 ffe680 ffeeaa fff6d5
28220b 504416 786721 a0892c c8ab37 d3bc5f decd87`.split(/\s+/);
const swatches = document.getElementById("swatches");
["none", ...COLORS].forEach((color) => {
  const b = document.createElement("button");
  b.className = color === "none" ? "swatch swatch-none" : "swatch";
  b.setAttribute("aria-label", color);
  if (color !== "none") b.style.background = `#${color}`;
  swatches.append(b);
});
```
